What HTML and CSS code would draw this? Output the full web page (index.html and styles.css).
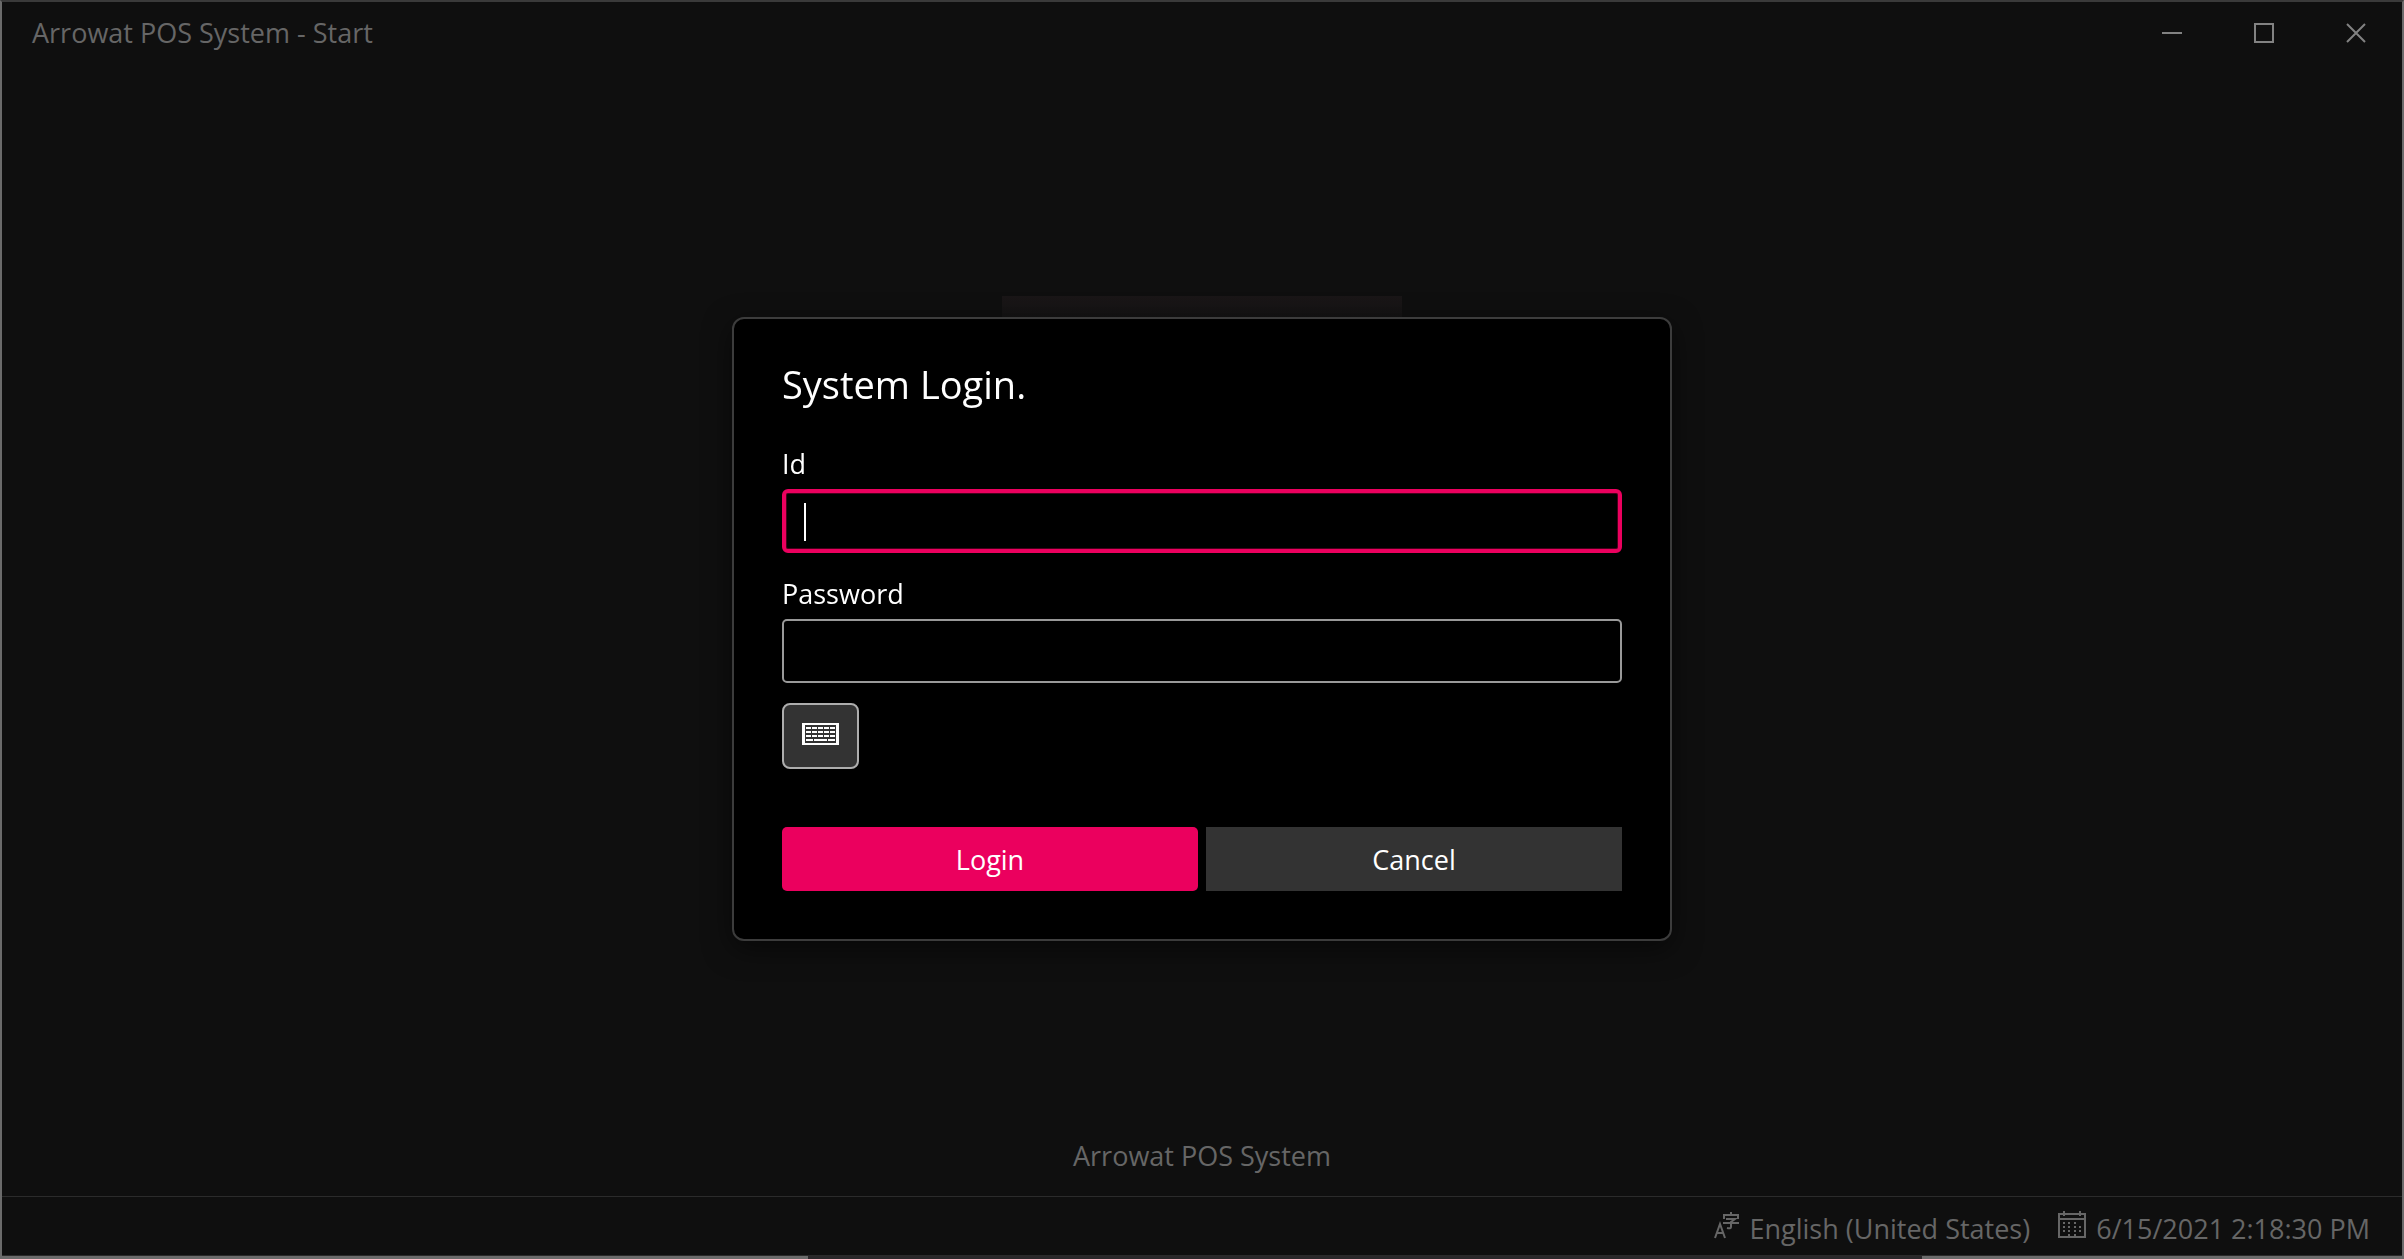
FILE: index.html
```html
<!DOCTYPE html>
<html lang="en">
<head>
<meta charset="utf-8">
<meta name="viewport" content="width=device-width, initial-scale=1">
<title>Arrowat POS System - Start</title>
<link rel="stylesheet" href="styles.css">
</head>
<body>
<div class="window">
  <header class="titlebar">
    <span class="titlebar-text">Arrowat POS System - Start</span>
    <div class="window-controls">
      <button class="window-button" type="button" aria-label="Minimize">
        <svg width="20" height="20" viewBox="0 0 20 20"><path d="M0 10h20" stroke="currentColor" stroke-width="2"/></svg>
      </button>
      <button class="window-button" type="button" aria-label="Maximize">
        <svg width="20" height="20" viewBox="0 0 20 20"><path d="M1 1h18v18H1z" fill="none" stroke="currentColor" stroke-width="2"/></svg>
      </button>
      <button class="window-button" type="button" aria-label="Close">
        <svg width="20" height="20" viewBox="0 0 20 20"><path d="M1 1l18 18M19 1L1 19" stroke="currentColor" stroke-width="2"/></svg>
      </button>
    </div>
  </header>

  <main class="start">
    <div class="start-logo"></div>
    <p class="start-name">Arrowat POS System</p>
  </main>

  <footer class="statusbar">
    <div class="status-item">
      <svg width="26" height="28" viewBox="0 0 26 28" fill="none" stroke="currentColor" stroke-width="2" aria-hidden="true">
        <path d="M1 27L6 13l5 14M3 22h6"/>
        <path d="M17 1v3M10 8V4h14v4M12 8h9l-4 3v5q0 2-4 1M9 12h16"/>
      </svg>
      <span>English (United States)</span>
    </div>
    <div class="status-item">
      <svg width="28" height="28" viewBox="0 0 28 28" fill="none" stroke="currentColor" aria-hidden="true">
        <path stroke-width="2" d="M1 3h26v23H1zM1 8h26M6 0v5M22 0v5"/>
        <path stroke-width="2" stroke-dasharray="2 2" d="M6 11v10M11 11v14M17 11v14M22 15v8"/>
      </svg>
      <span>6/15/2021 2:18:30 PM</span>
    </div>
  </footer>
</div>

<div class="overlay">
  <form class="dialog" role="dialog" aria-labelledby="dialog-title">
    <h1 class="dialog-title" id="dialog-title">System Login.</h1>
    <div class="field">
      <label class="field-label" for="login-id">Id</label>
      <div class="field-box">
        <input class="field-input field-input-active" id="login-id" type="text">
        <span class="caret"></span>
      </div>
    </div>
    <div class="field">
      <label class="field-label" for="login-password">Password</label>
      <input class="field-input" id="login-password" type="password">
    </div>
    <button class="keyboard-button" type="button" aria-label="On-screen keyboard">
      <svg width="37" height="22" viewBox="0 0 37 22" fill="currentColor" shape-rendering="crispEdges">
        <path fill-rule="evenodd" d="M0 0h37v22H0zM3 2v18h31V2z"/>
        <path d="M4 4h5v2H4zM10 4h5v2h-5zM16 4h5v2h-5zM22 4h5v2h-5zM28 4h5v2h-5zM4 8h5v2H4zM10 8h5v2h-5zM16 8h5v2h-5zM22 8h5v2h-5zM28 8h5v2h-5zM4 12h5v2H4zM10 12h5v2h-5zM16 12h5v2h-5zM22 12h5v2h-5zM28 12h5v2h-5zM4 16h7v2H4zM12 16h13v2H12zM26 16h7v2h-7z"/>
      </svg>
    </button>
    <div class="dialog-actions">
      <button class="action action-primary" type="submit">Login</button>
      <button class="action" type="button">Cancel</button>
    </div>
  </form>
</div>
</body>
</html>
```
FILE: styles.css
```css
* {
  box-sizing: border-box;
}

body {
  margin: 0;
  background: #0f0f0f;
  color: #666;
  font-family: "Open Sans", "Noto Sans", sans-serif;
  font-size: 27px;
  line-height: 36px;
}

button,
input {
  font: inherit;
}

svg {
  display: block;
}

.window {
  display: flex;
  flex-direction: column;
  min-height: 100vh;
  border: 2px solid #6b6b6b;
  border-top-color: #3a3a3a;
  border-bottom: 0;
}

/* Lower frame edge, dimmed along the middle */
.window::after {
  content: "";
  height: 3px;
  border-top: 1px solid #2a2a2a;
  background: linear-gradient(to right, #6b6b6b 33.6%, #2a282a 33.6% 80%, #6b6b6b 80%);
}

.titlebar {
  display: flex;
  justify-content: space-between;
  align-items: center;
  height: 62px;
  padding-left: 30px;
}

.window-controls {
  display: flex;
  align-self: stretch;
}

.window-button {
  display: grid;
  place-items: center;
  width: 92px;
  padding: 0;
  border: 0;
  background: none;
  color: #828282;
}

.start {
  display: flex;
  flex: 1;
  flex-direction: column;
  align-items: center;
  justify-content: space-between;
  padding: 232px 0 22px;
}

.start-logo {
  width: 400px;
  height: 400px;
  background: linear-gradient(#1a1617, #131313 24px);
}

.start-name {
  margin: 0;
}

.statusbar {
  display: flex;
  justify-content: flex-end;
  align-items: center;
  gap: 28px;
  height: 59px;
  padding: 6px 32px 0 0;
  border-top: 1px solid #2b2b2b;
}

.status-item {
  display: flex;
  align-items: baseline;
  gap: 10px;
}

.overlay {
  position: fixed;
  inset: 0;
  display: grid;
  place-items: center;
  padding-bottom: 2px;
}

.dialog {
  display: flex;
  flex-direction: column;
  width: 100%;
  max-width: 940px;
  padding: 39px 48px 48px;
  border: 2px solid #3c3c3c;
  border-radius: 12px;
  background: #000;
  box-shadow: 0 8px 28px rgba(0, 0, 0, 0.5);
  color: #fff;
}

.dialog-title {
  margin: 0 0 36px;
  font-size: 38px;
  font-weight: 400;
  line-height: 52px;
}

.field {
  display: flex;
  flex-direction: column;
  gap: 7px;
}

.field + .field {
  margin-top: 23px;
}

.field-box {
  position: relative;
}

.field-input {
  display: block;
  width: 100%;
  height: 64px;
  padding: 0 20px;
  border: 2px solid #999;
  border-radius: 5px;
  outline: 0;
  background: #000;
  color: #fff;
}

.field-input-active {
  border: 4px solid #eb005e;
  border-radius: 6px;
  box-shadow: inset 0 0 0 1px #47001c;
}

.caret {
  position: absolute;
  top: 14px;
  left: 22px;
  width: 2px;
  height: 38px;
  background: #fff;
}

.keyboard-button {
  display: grid;
  place-items: center;
  align-self: flex-start;
  width: 77px;
  height: 66px;
  margin-top: 20px;
  padding: 0 0 4px;
  border: 2px solid #adadad;
  border-radius: 8px;
  background: #333;
  color: #fff;
}

.dialog-actions {
  display: grid;
  grid-template-columns: 1fr 1fr;
  gap: 8px;
  margin-top: 58px;
}

.action {
  height: 64px;
  padding: 2px 0 0;
  border: 0;
  background: #333;
  color: #fff;
}

.action-primary {
  border-radius: 5px;
  background: #eb005e;
}
```
